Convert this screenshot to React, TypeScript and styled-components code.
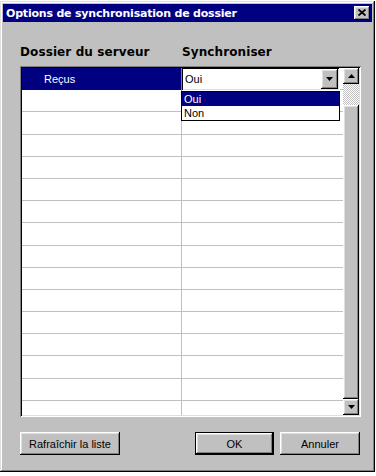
import React from "react";
import styled, { createGlobalStyle } from "styled-components";

// Win98 style dialog: folder sync options

const GlobalStyle = createGlobalStyle`
  html, body { margin: 0; padding: 0; background: #fff; }
  body { font-family: "Liberation Sans", Arial, sans-serif; font-size: 11px; color: #000; }
  * { box-sizing: border-box; }
`;

const raised = `
  box-shadow: inset -1px -1px #000, inset 1px 1px #fff,
    inset -2px -2px #808080, inset 2px 2px #dfdfdf;
`;

const sunken = `
  box-shadow: inset 1px 1px #808080, inset -1px -1px #fff,
    inset 2px 2px #000, inset -2px -2px #dfdfdf;
`;

const Window = styled.div`
  width: 375px;
  height: 471px;
  margin-top: 1px;
  padding: 3px;
  background: #c0c0c0;
  box-shadow: inset -1px -1px #000, inset 1px 1px #dfdfdf,
    inset -2px -2px #808080, inset 2px 2px #fff;
  display: flex;
  flex-direction: column;
`;

const TitleBar = styled.div`
  height: 18px;
  background: #000080;
  display: flex;
  align-items: center;
  justify-content: space-between;
  padding: 0 2px 0 3px;
`;

const TitleText = styled.span`
  font-family: "DejaVu Sans", Verdana, sans-serif;
  font-weight: bold;
  font-size: 11px;
  letter-spacing: -0.2px;
  color: #fff;
`;

const CloseButton = styled.div`
  width: 16px;
  height: 14px;
  background: #c0c0c0;
  ${raised}
  display: flex;
  align-items: center;
  justify-content: center;
  padding-bottom: 1px;
`;

const Body = styled.div`
  flex: 1;
  display: flex;
  flex-direction: column;
  padding: 0 11px 0 17px;
`;

const Headers = styled.div`
  display: grid;
  grid-template-columns: 162px 1fr;
  margin-top: 23px;
  height: 14px;
  line-height: 14px;
  margin-bottom: 7px;
`;

const HeaderLabel = styled.span`
  font-family: "DejaVu Sans", Verdana, sans-serif;
  font-weight: bold;
  font-size: 12px;
  letter-spacing: 0.1px;
`;

const ListFrame = styled.div`
  height: 351px;
  padding: 2px;
  ${sunken}
  display: flex;
`;

const Table = styled.div`
  flex: 1;
  background: #fff;
  overflow: hidden;
  display: flex;
  flex-direction: column;
`;

const Row = styled.div`
  flex: none;
  height: 22.2px;
  display: grid;
  grid-template-columns: 160px 1fr;
  border-bottom: 1px solid #c0c0c0;
`;

const NameCell = styled.div<{ $selected?: boolean }>`
  border-right: 1px solid #c0c0c0;
  background: ${(p) => (p.$selected ? "#000080" : "#fff")};
  color: ${(p) => (p.$selected ? "#fff" : "#000")};
  padding-left: 22px;
  display: flex;
  align-items: center;
`;

const SyncCell = styled.div`
  position: relative;
  display: flex;
`;

const Combo = styled.div`
  margin: -1px 2px -1px -1px;
  width: 159px;
  height: 24px;
  padding: 2px;
  background: #fff;
  ${sunken}
  display: flex;
  align-items: center;
`;

const ComboValue = styled.span`
  flex: 1;
  padding-left: 2px;
`;

const ComboArrow = styled.div`
  width: 17px;
  height: 20px;
  background: #c0c0c0;
  ${raised}
  display: flex;
  align-items: center;
  justify-content: center;
`;

const Dropdown = styled.div`
  position: absolute;
  top: 23px;
  left: -1px;
  width: 159px;
  border: 1px solid #000;
  background: #fff;
  z-index: 2;
`;

const Option = styled.div<{ $active?: boolean }>`
  height: 14px;
  line-height: 14px;
  padding-left: 2px;
  background: ${(p) => (p.$active ? "#000080" : "#fff")};
  color: ${(p) => (p.$active ? "#fff" : "#000")};
`;

const Scrollbar = styled.div`
  width: 16px;
  display: flex;
  flex-direction: column;
`;

const ScrollButton = styled.div`
  width: 16px;
  height: 16px;
  background: #c0c0c0;
  ${raised}
  display: flex;
  align-items: center;
  justify-content: center;
`;

const Track = styled.div`
  flex: 1;
  display: flex;
  flex-direction: column;
  padding-top: 21px;
  background: repeating-conic-gradient(#c0c0c0 0 25%, #fff 0 50%) 0 0 / 2px 2px;
`;

const Thumb = styled.div`
  flex: 1;
  background: #c0c0c0;
  ${raised}
`;

const Footer = styled.div`
  display: flex;
  margin-top: 15px;
  padding-right: 1px;
  gap: 6px;
`;

const Button = styled.button<{ $width: number; $default?: boolean }>`
  width: ${(p) => p.$width}px;
  height: 23px;
  background: #c0c0c0;
  font-family: "Liberation Sans", Arial, sans-serif;
  font-size: 11px;
  color: #000;
  padding: 0;
  border: ${(p) => (p.$default ? "1px solid #000" : "none")};
  ${raised}
`;

const Spacer = styled.div`
  flex: 1;
`;

const Arrow = ({ up }: { up?: boolean }) => (
  <svg width="7" height="4" viewBox="0 0 7 4">
    <polygon points={up ? "0,4 7,4 3.5,0" : "0,0 7,0 3.5,4"} fill="#000" />
  </svg>
);

const CloseIcon = () => (
  <svg width="8" height="7" viewBox="0 0 8 7">
    <path d="M0.5 0.5 L7.5 6.5 M7.5 0.5 L0.5 6.5" stroke="#000" strokeWidth="1.8" />
  </svg>
);

const EMPTY_ROWS = 15;

export default function App() {
  return (
    <>
      <GlobalStyle />
      <Window>
        <TitleBar>
          <TitleText>Options de synchronisation de dossier</TitleText>
          <CloseButton>
            <CloseIcon />
          </CloseButton>
        </TitleBar>
        <Body>
          <Headers>
            <HeaderLabel>Dossier du serveur</HeaderLabel>
            <HeaderLabel>Synchroniser</HeaderLabel>
          </Headers>
          <ListFrame>
            <Table>
              <Row>
                <NameCell $selected>Reçus</NameCell>
                <SyncCell>
                  <Combo>
                    <ComboValue>Oui</ComboValue>
                    <ComboArrow>
                      <Arrow />
                    </ComboArrow>
                  </Combo>
                  <Dropdown>
                    <Option $active>Oui</Option>
                    <Option>Non</Option>
                  </Dropdown>
                </SyncCell>
              </Row>
              {Array.from({ length: EMPTY_ROWS }, (_, i) => (
                <Row key={i}>
                  <NameCell />
                  <SyncCell />
                </Row>
              ))}
            </Table>
            <Scrollbar>
              <ScrollButton>
                <Arrow up />
              </ScrollButton>
              <Track>
                <Thumb />
              </Track>
              <ScrollButton>
                <Arrow />
              </ScrollButton>
            </Scrollbar>
          </ListFrame>
          <Footer>
            <Button $width={100}>Rafraîchir la liste</Button>
            <Spacer />
            <Button $width={79} $default>
              OK
            </Button>
            <Button $width={80}>Annuler</Button>
          </Footer>
        </Body>
      </Window>
    </>
  );
}
